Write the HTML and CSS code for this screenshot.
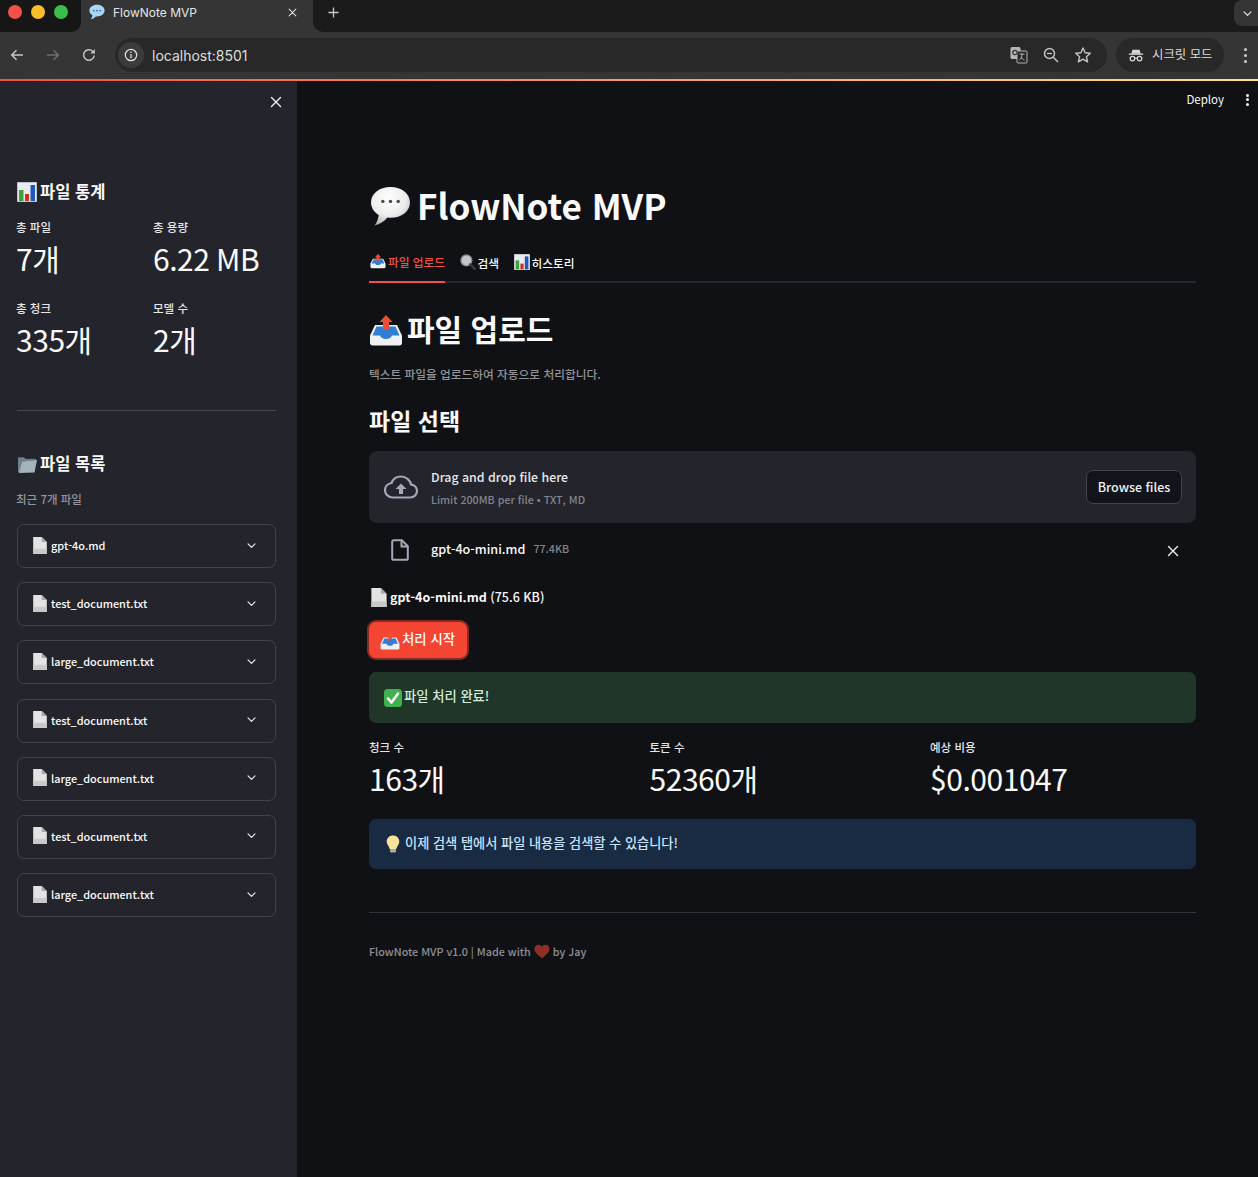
FILE: index.html
```html
<!DOCTYPE html>
<html lang="ko">
  <head>
    <meta charset="utf-8">
    <title>FlowNote MVP</title>
    <link rel="stylesheet" href="styles.css">
  </head>
  <body>
    <!-- emoji and icon shapes, reused below -->
    <svg class="defs" width="0" height="0">
      <defs>
        <radialGradient id="bubble-fill" cx="45%" cy="30%" r="75%">
          <stop offset="0" stop-color="#ffffff"/>
          <stop offset=".6" stop-color="#ececec"/>
          <stop offset="1" stop-color="#a8a8a8"/>
        </radialGradient>
      </defs>
      <symbol id="e-bubble" viewBox="0 0 40 40">
        <path d="M20 1C9 1 1 7.500 1 16c0 5 3 9.500 7.500 12.200C8.300 32 6.500 35.500 4.500 38.500c5-1 9.500-4 12.500-7.800 1 .2 2 .3 3 .3 11 0 19-6.500 19-15S31 1 20 1z" fill="url(#bubble-fill)"/>
        <circle cx="12.500" cy="15" r="1.700" fill="#4a4a4a"/><circle cx="20" cy="15" r="1.700" fill="#4a4a4a"/><circle cx="27.500" cy="15" r="1.700" fill="#4a4a4a"/>
      </symbol>
      <symbol id="e-tabbubble" viewBox="0 0 40 40">
        <path d="M20 2C9 2 1 8 1 16.500c0 5 3 9 7.500 11.700C8.300 32 6.500 35.500 4.500 38c5-1 9.500-3.500 12.500-7 1 .2 2 .3 3 .3 11 0 19-6.300 19-14.800S31 2 20 2z" fill="#a9d6f5"/>
        <circle cx="12" cy="16.500" r="2.300" fill="#2f6fb0"/><circle cx="20" cy="16.500" r="2.300" fill="#2f6fb0"/><circle cx="28" cy="16.500" r="2.300" fill="#2f6fb0"/>
      </symbol>
      <symbol id="e-chart" viewBox="0 0 20 20">
        <rect x="0" y="0" width="20" height="20" fill="#e9edf2"/>
        <rect x="0" y="0" width="20" height="20" fill="none" stroke="#8c97a3" stroke-width="1"/>
        <rect x="2" y="8" width="4.500" height="11" fill="#3fa23c"/>
        <rect x="8" y="12" width="4" height="7" fill="#c8321f"/>
        <rect x="13.500" y="3" width="4.500" height="16" fill="#1f58b8"/>
      </symbol>
      <symbol id="e-folder" viewBox="0 0 20 20">
        <path d="M1 3h6l1.500 1.500H18V9H1z" fill="#33414b"/>
        <path d="M1 3.500V18l2 1 2-11.500 14-1.500V5H8.500L7 3.500z" fill="#6f808b"/>
        <path d="M5 7.500L20 6l-2.500 12.500L2 19z" fill="#a3b3bd"/>
      </symbol>
      <symbol id="e-inbox" viewBox="0 0 34 32">
        <path d="M6 11h22l5 10.500V29c0 1.500-1 2.500-2.500 2.500h-27C2 31.500 1 30.500 1 29v-7.500z" fill="#eef0f3"/>
        <path d="M7.500 12.500h19l4 9H23c-.7 2-2.800 3.500-6 3.500s-5.300-1.500-6-3.500H3.500z" fill="#2f7fd6"/>
        <path d="M17 1l6.500 7H20v8h-6V8h-3.500z" fill="#ee4d38"/>
      </symbol>
      <symbol id="e-glass" viewBox="0 0 20 20">
        <circle cx="8" cy="8" r="6.800" fill="#c3c7cc" stroke="#858a90" stroke-width="1.600"/>
        <path d="M12.800 12.800L18.500 18.500" stroke="#3a3c40" stroke-width="3" stroke-linecap="round"/>
      </symbol>
      <symbol id="e-page" viewBox="0 0 16 20">
        <path d="M0 0h10l6 6v14H0z" fill="#e3e3e3"/>
        <path d="M10 0l6 6h-6z" fill="#a9a9a9"/>
        <path d="M0 14h16v6H0z" fill="#c9c9c9"/>
      </symbol>
      <symbol id="e-check" viewBox="0 0 18 18">
        <rect width="18" height="18" rx="3.500" fill="#3fb14f"/>
        <path d="M4 9.500l3.500 4L14 4.500" fill="none" stroke="#fff" stroke-width="2.600" stroke-linecap="round" stroke-linejoin="round"/>
      </symbol>
      <symbol id="e-bulb" viewBox="0 0 14 18">
        <path d="M7 .5C3.300.5.700 3.200.700 6.500c0 3 2.300 4.300 3 7.500h6.600c.7-3.200 3-4.500 3-7.500C13.300 3.200 10.700.5 7 .5z" fill="#f7e39a"/>
        <rect x="4" y="14" width="6" height="3.500" rx="1" fill="#a9adb3"/>
      </symbol>
      <symbol id="e-heart" viewBox="0 0 18 16">
        <path d="M9 15.500C3 11 .5 8.300.5 5 .5 2.500 2.500.5 5 .5c1.700 0 3.200.9 4 2.400C9.800 1.400 11.300.5 13 .5c2.500 0 4.500 2 4.500 4.500 0 3.300-2.500 6-8.500 10.500z" fill="#8f2f28"/>
      </symbol>
      <symbol id="i-x" viewBox="0 0 12 12">
        <path d="M1.500 1.500l9 9M10.500 1.500l-9 9" fill="none" stroke="currentColor" stroke-width="1.400" stroke-linecap="round"/>
      </symbol>
      <symbol id="i-chev" viewBox="0 0 12 12">
        <path d="M2.200 4.200L6 8l3.800-3.800" fill="none" stroke="currentColor" stroke-width="1.400" stroke-linecap="round" stroke-linejoin="round"/>
      </symbol>
    </svg>

    <div class="window">
      <div class="tabstrip">
        <div class="lights">
          <span class="light light-red"></span>
          <span class="light light-yellow"></span>
          <span class="light light-green"></span>
        </div>
        <div class="browser-tab">
          <svg class="favicon"><use href="#e-tabbubble"/></svg>
          <span class="browser-tab-title">FlowNote MVP</span>
          <svg class="browser-tab-x"><use href="#i-x"/></svg>
        </div>
        <div class="tab-rest">
          <svg class="new-tab" viewBox="0 0 12 12"><path d="M6 .5v11M.5 6h11" fill="none" stroke="currentColor" stroke-width="1.400"/></svg>
          <div class="tab-search">
            <svg viewBox="0 0 12 12"><use href="#i-chev"/></svg>
          </div>
        </div>
      </div>

      <div class="toolbar">
        <svg class="nav-icon" viewBox="0 0 16 16"><path d="M14 8H3M7.500 3.200L2.700 8l4.800 4.800" fill="none" stroke="#c4c4c4" stroke-width="1.500"/></svg>
        <svg class="nav-icon" viewBox="0 0 16 16"><path d="M2 8h11M8.500 3.200L13.300 8l-4.800 4.800" fill="none" stroke="#6e6e6e" stroke-width="1.500"/></svg>
        <svg class="nav-icon" viewBox="0 0 16 16"><path d="M13.200 8.500a5.300 5.300 0 1 1-1.500-4.200L13.500 6" fill="none" stroke="#c4c4c4" stroke-width="1.500"/><path d="M13.800 2v4.500H9.300z" fill="#c4c4c4"/></svg>
        <div class="omnibox">
          <span class="site-info">
            <svg viewBox="0 0 14 14"><circle cx="7" cy="7" r="5.700" fill="none" stroke="#e2e2e2" stroke-width="1.200"/><path d="M7 6.200v4" stroke="#e2e2e2" stroke-width="1.300"/><circle cx="7" cy="4.200" r=".8" fill="#e2e2e2"/></svg>
          </span>
          <span class="url">localhost:8501</span>
          <span class="omni-icons">
            <svg viewBox="0 0 18 18"><rect x=".5" y="1" width="10" height="12" rx="1.500" fill="#b5b5b5"/><rect x="7" y="5" width="10" height="12" rx="1" fill="#282828" stroke="#b5b5b5"/><path d="M9.500 8h5M12 8c0 3-1 5-2.500 6M11 11c.7 1.300 2 2.500 3.500 3" fill="none" stroke="#b5b5b5"/><circle cx="5" cy="6.500" r="2.200" fill="none" stroke="#333" stroke-width="1.200"/></svg>
            <svg viewBox="0 0 18 18"><circle cx="7.500" cy="7.500" r="5" fill="none" stroke="#c4c4c4" stroke-width="1.500"/><path d="M11.200 11.200L16 16" stroke="#c4c4c4" stroke-width="1.500"/><path d="M5 7.500h5" stroke="#c4c4c4" stroke-width="1.300"/></svg>
            <svg viewBox="0 0 18 18"><path d="M9 2l2.100 4.800 5.200.5-3.900 3.400 1.200 5.100L9 13.100l-4.600 2.700 1.200-5.100L1.700 7.300l5.200-.5z" fill="none" stroke="#c4c4c4" stroke-width="1.400" stroke-linejoin="round"/></svg>
          </span>
        </div>
        <div class="incognito">
          <svg viewBox="0 0 18 16"><path d="M5 1.500h8l1.300 4.500H3.700z" fill="#d6d6d6"/><path d="M1 6.500h16" stroke="#d6d6d6" stroke-width="1.500"/><circle cx="5" cy="11.500" r="2.600" fill="none" stroke="#d6d6d6" stroke-width="1.400"/><circle cx="13" cy="11.500" r="2.600" fill="none" stroke="#d6d6d6" stroke-width="1.400"/><path d="M7.500 11h3" stroke="#d6d6d6" stroke-width="1.300"/></svg>
          <span class="lift-1">시크릿 모드</span>
        </div>
        <div class="menu-dots"><span></span><span></span><span></span></div>
      </div>

      <div class="decoration"></div>

      <div class="app">
        <aside class="sidebar">
          <div class="sidebar-top">
            <svg class="sidebar-close"><use href="#i-x"/></svg>
          </div>
          <h3 class="side-title first"><svg class="emo-side"><use href="#e-chart"/></svg><span class="lift-1">파일 통계</span></h3>
          <div class="side-metrics">
            <div class="metric"><div class="metric-label">총 파일</div><div class="metric-value">7개</div></div>
            <div class="metric"><div class="metric-label">총 용량</div><div class="metric-value">6.22 MB</div></div>
            <div class="metric"><div class="metric-label">총 청크</div><div class="metric-value">335개</div></div>
            <div class="metric"><div class="metric-label">모델 수</div><div class="metric-value">2개</div></div>
          </div>
          <hr class="side-rule">
          <h3 class="side-title"><svg class="emo-side"><use href="#e-folder"/></svg><span class="lift-1">파일 목록</span></h3>
          <p class="side-caption">최근 7개 파일</p>
          <div class="expanders">
            <div class="expander"><svg class="emo-page"><use href="#e-page"/></svg><span class="expander-name">gpt-4o.md</span><svg class="chev"><use href="#i-chev"/></svg></div>
            <div class="expander"><svg class="emo-page"><use href="#e-page"/></svg><span class="expander-name">test_document.txt</span><svg class="chev"><use href="#i-chev"/></svg></div>
            <div class="expander"><svg class="emo-page"><use href="#e-page"/></svg><span class="expander-name">large_document.txt</span><svg class="chev"><use href="#i-chev"/></svg></div>
            <div class="expander"><svg class="emo-page"><use href="#e-page"/></svg><span class="expander-name">test_document.txt</span><svg class="chev"><use href="#i-chev"/></svg></div>
            <div class="expander"><svg class="emo-page"><use href="#e-page"/></svg><span class="expander-name">large_document.txt</span><svg class="chev"><use href="#i-chev"/></svg></div>
            <div class="expander"><svg class="emo-page"><use href="#e-page"/></svg><span class="expander-name">test_document.txt</span><svg class="chev"><use href="#i-chev"/></svg></div>
            <div class="expander"><svg class="emo-page"><use href="#e-page"/></svg><span class="expander-name">large_document.txt</span><svg class="chev"><use href="#i-chev"/></svg></div>
          </div>
        </aside>

        <main class="main">
          <div class="main-top">
            <span class="deploy">Deploy</span>
            <div class="main-dots"><span></span><span></span><span></span></div>
          </div>
          <div class="content">
            <h1 class="title"><svg class="emo-title"><use href="#e-bubble"/></svg><span class="lift-3">FlowNote MVP</span></h1>

            <div class="tabs">
              <div class="tab active"><svg class="emo-tab"><use href="#e-inbox"/></svg>파일 업로드</div>
              <div class="tab"><svg class="emo-tab"><use href="#e-glass"/></svg>검색</div>
              <div class="tab"><svg class="emo-tab"><use href="#e-chart"/></svg>히스토리</div>
            </div>

            <h2 class="section-title"><svg class="emo-section"><use href="#e-inbox"/></svg><span class="lift-2">파일 업로드</span></h2>
            <p class="caption">텍스트 파일을 업로드하여 자동으로 처리합니다.</p>
            <h3 class="sub-title">파일 선택</h3>

            <div class="uploader">
              <svg class="cloud" viewBox="0 0 34 24"><path d="M9 22.500h17c4 0 7-2.800 7-6.500 0-3.400-2.500-6-5.800-6.400C26 5 22 1.500 17 1.500c-4.300 0-8 2.600-9.500 6.500C3.800 8.500 1 11.500 1 15.200c0 4 3.500 7.300 8 7.300z" fill="none" stroke="#a3a8b8" stroke-width="2.200"/><path d="M17 8.500l5.500 5.500h-3.500v5h-4v-5h-3.500z" fill="#a3a8b8"/></svg>
              <div class="uploader-text">
                <div class="uploader-main">Drag and drop file here</div>
                <div class="uploader-sub">Limit 200MB per file • TXT, MD</div>
              </div>
              <button class="browse">Browse files</button>
            </div>

            <div class="file-row">
              <svg class="file-icon" viewBox="0 0 18 22"><path d="M2.800 1.200h8l6 6v12c0 .9-.7 1.600-1.600 1.600H2.800c-.9 0-1.600-.7-1.600-1.600V2.800c0-.9.700-1.600 1.600-1.600z" fill="none" stroke="#a3a8b8" stroke-width="2"/><path d="M10.500 1.500v6h6" fill="none" stroke="#a3a8b8" stroke-width="2"/></svg>
              <span class="file-name">gpt-4o-mini.md</span>
              <span class="file-size">77.4KB</span>
              <svg class="file-x"><use href="#i-x"/></svg>
            </div>

            <p class="file-line"><svg class="emo-line"><use href="#e-page"/></svg><strong class="lift-1">gpt-4o-mini.md</strong><span class="lift-1"> (75.6 KB)</span></p>

            <button class="primary"><svg class="emo-btn"><use href="#e-inbox"/></svg><span class="lift-2">처리 시작</span></button>

            <div class="alert alert-success"><svg class="emo-check"><use href="#e-check"/></svg><span class="lift-2">파일 처리 완료!</span></div>

            <div class="main-metrics">
              <div class="metric"><div class="metric-label">청크 수</div><div class="metric-value">163개</div></div>
              <div class="metric"><div class="metric-label">토큰 수</div><div class="metric-value">52360개</div></div>
              <div class="metric"><div class="metric-label">예상 비용</div><div class="metric-value">$0.001047</div></div>
            </div>

            <div class="alert alert-info"><svg class="emo-bulb"><use href="#e-bulb"/></svg><span class="lift-2">이제 검색 탭에서 파일 내용을 검색할 수 있습니다!</span></div>

            <hr class="main-rule">
            <p class="footer">FlowNote MVP v1.0 | Made with <svg class="emo-heart"><use href="#e-heart"/></svg> by Jay</p>
          </div>
        </main>
      </div>
    </div>
  </body>
</html>
```

FILE: styles.css
```css
* {
  box-sizing: border-box;
}

html, body {
  margin: 0;
  height: 100%;
  background: #101115;
}

body {
  font-family: "Noto Sans CJK KR", "Noto Sans", sans-serif;
  color: #fafafa;
}

h1, h2, h3, p, hr {
  margin: 0;
}

svg {
  display: block;
  flex: none;
}

/* the CJK font sits low in its line box, these pull the text back up */
.lift-1 {
  padding-bottom: 2px;
}

.lift-2 {
  padding-bottom: 4px;
}

.lift-3 {
  padding-bottom: 6px;
}

.defs {
  position: absolute;
}

.window {
  height: 1177px;
  display: flex;
  flex-direction: column;
  overflow: hidden;
}

/* browser frame */
.tabstrip {
  height: 32px;
  background: #353535;
  display: flex;
  flex: none;
}

.lights {
  width: 81px;
  height: 32px;
  background: #161616;
  padding: 5px 0 0 8px;
  display: flex;
  gap: 9px;
  border-bottom-right-radius: 10px;
}

.light {
  width: 14px;
  height: 14px;
  border-radius: 50%;
}

.light-red { background: #f4504a; }
.light-yellow { background: #f8bf2b; }
.light-green { background: #3bbf4c; }

.browser-tab {
  width: 232px;
  height: 32px;
  background: #353535;
  border-radius: 10px 10px 0 0;
  display: flex;
  align-items: center;
  padding: 0 16px 8px 8px;
  font-family: Inter, sans-serif;
  font-size: 12px;
  color: #e4e4e4;
}

.favicon {
  width: 16px;
  height: 16px;
  margin-right: 8px;
}

.browser-tab-title {
  flex: 1;
}

.browser-tab-x {
  width: 9px;
  height: 9px;
  color: #dcdcdc;
}

.tab-rest {
  flex: 1;
  background: #1b1b1b;
  border-bottom-left-radius: 10px;
  display: flex;
  padding: 7px 0 0 15px;
}

.new-tab {
  width: 11px;
  height: 11px;
  color: #c8c8c8;
}

.tab-search {
  width: 26px;
  height: 26px;
  margin: -7px -2px 0 auto;
  background: #353535;
  border-radius: 8px 0 0 8px;
  display: flex;
  align-items: center;
  justify-content: center;
  color: #e0e0e0;
}

.tab-search svg {
  width: 11px;
  height: 11px;
}

.toolbar {
  height: 47px;
  background: #353535;
  display: flex;
  align-items: center;
  padding: 0 0 1px 9px;
  flex: none;
}

.nav-icon {
  width: 16px;
  height: 16px;
  margin-right: 20px;
}

.nav-icon:nth-child(3) {
  margin-right: 18px;
}

.omnibox {
  width: 992px;
  height: 34px;
  background: #282828;
  border-radius: 17px;
  display: flex;
  align-items: center;
  padding: 0 15px 0 3px;
}

.site-info {
  width: 26px;
  height: 26px;
  border-radius: 50%;
  background: #3b3b3b;
  display: flex;
  align-items: center;
  justify-content: center;
}

.site-info svg {
  width: 14px;
  height: 14px;
}

.url {
  margin-left: 8px;
  font-family: Inter, sans-serif;
  font-size: 14px;
  color: #dedede;
  flex: 1;
}

.omni-icons {
  display: flex;
  align-items: center;
  gap: 14px;
}

.omni-icons svg {
  width: 18px;
  height: 18px;
}

.incognito {
  width: 108px;
  height: 34px;
  margin-left: 9px;
  background: #282828;
  border-radius: 17px;
  display: flex;
  align-items: center;
  padding-left: 12px;
  gap: 8px;
  font-size: 12.400px;
  color: #dcdcdc;
}

.incognito svg {
  width: 16px;
  height: 15px;
}

.menu-dots {
  margin-left: 20px;
  display: flex;
  flex-direction: column;
  gap: 3px;
}

.menu-dots span, .main-dots span {
  width: 3px;
  height: 3px;
  border-radius: 50%;
  background: #d0d0d0;
}

.decoration {
  height: 2px;
  flex: none;
  background: linear-gradient(90deg, #f4503f, #ffe27a);
}

/* streamlit app */
.app {
  flex: 1;
  display: flex;
  min-height: 0;
}

.sidebar {
  width: 297px;
  background: #23242c;
  padding: 0 21px 0 17px;
  flex: none;
}

.sidebar-top {
  height: 42px;
  display: flex;
  align-items: center;
  justify-content: flex-end;
  margin-right: -6px;
}

.sidebar-close {
  width: 12px;
  height: 12px;
  color: #f0f0f0;
}

.side-title {
  font-size: 16.500px;
  font-weight: 700;
  height: 24px;
  display: flex;
  align-items: center;
  margin-top: 41px;
}

.side-title.first {
  margin-top: 57px;
}

.emo-side {
  width: 20px;
  height: 20px;
  margin-right: 3px;
}

.side-metrics {
  display: grid;
  grid-template-columns: 137px 1fr;
  row-gap: 20px;
  margin: 15px 0 0 -1px;
}

.metric-label {
  font-size: 11.500px;
  font-weight: 500;
  line-height: 16px;
  color: #e6e6e8;
}

.metric-value {
  font-size: 30px;
  line-height: 40px;
  letter-spacing: -.45px;
  word-spacing: -1.500px;
  margin: 3px 0 2px;
  white-space: nowrap;
}

.side-rule {
  border: 0;
  border-top: 1px solid #45464e;
  margin-top: 49px;
}

.side-caption {
  font-size: 11.500px;
  font-weight: 500;
  line-height: 16px;
  color: #94959c;
  margin: 15px 0 0 -1px;
}

.expanders {
  display: flex;
  flex-direction: column;
  gap: 14.200px;
  margin-top: 17px;
}

.expander {
  height: 44px;
  border: 1px solid #43444b;
  border-radius: 7px;
  display: flex;
  align-items: center;
  padding: 0 18px 2px 15px;
  font-size: 10.900px;
  font-weight: 500;
}

.emo-page {
  width: 14px;
  height: 17px;
  margin-right: 4px;
}

.expander-name {
  flex: 1;
}

.chev {
  width: 11px;
  height: 11px;
  color: #e6e6e6;
}

.main {
  flex: 1;
  min-width: 0;
  background: #101115;
}

.main-top {
  height: 38px;
  display: flex;
  align-items: center;
  justify-content: flex-end;
  padding: 0 9px 1px 0;
}

.deploy {
  font-size: 11.500px;
  padding-bottom: 2px;
  margin-right: 22px;
}

.main-dots {
  display: flex;
  flex-direction: column;
  gap: 1.500px;
}

.main-dots span {
  background: #f0f0f0;
}

.content {
  width: 827px;
  margin-left: 72px;
}

.title {
  font-size: 35px;
  font-weight: 700;
  height: 46px;
  margin-top: 65px;
  display: flex;
  align-items: center;
}

.emo-title {
  width: 41px;
  height: 41px;
  margin: 0 6px 2px 1px;
}

.tabs {
  height: 40px;
  margin-top: 13px;
  border-bottom: 2px solid #26272d;
  display: flex;
  gap: 13.500px;
}

.tab {
  height: 40px;
  display: flex;
  align-items: center;
  padding-bottom: 2px;
  font-size: 11.700px;
  font-weight: 500;
}

.tab.active {
  color: #f4503f;
  border-bottom: 2px solid #f4503f;
}

.emo-tab {
  width: 16px;
  height: 16px;
  margin: 0 2px 0 1px;
}

.section-title {
  font-size: 30px;
  font-weight: 700;
  height: 40px;
  margin-top: 27px;
  display: flex;
  align-items: center;
}

.emo-section {
  width: 34px;
  height: 32px;
  margin-right: 4px;
}

.caption {
  font-size: 11.700px;
  font-weight: 500;
  line-height: 16px;
  color: #93949a;
  margin-top: 16px;
}

.sub-title {
  font-size: 23px;
  font-weight: 700;
  line-height: 28px;
  margin-top: 24px;
  padding-bottom: 2px;
}

.uploader {
  height: 72px;
  margin-top: 15px;
  background: #23242c;
  border-radius: 8px;
  display: flex;
  align-items: center;
  padding: 0 14px 0 15px;
}

.cloud {
  width: 34px;
  height: 24px;
  margin-right: 13px;
}

.uploader-text {
  flex: 1;
}

.uploader-main {
  font-size: 12.350px;
  font-weight: 500;
  line-height: 18px;
  margin-top: 2px;
  color: #e8e8ea;
}

.uploader-sub {
  font-size: 10.700px;
  font-weight: 500;
  line-height: 16px;
  color: #83858d;
  margin-top: 6px;
}

.browse {
  width: 96px;
  height: 34px;
  background: #12141b;
  border: 1px solid #43444b;
  border-radius: 7px;
  color: #f0f0f0;
  font-family: inherit;
  font-size: 12.500px;
  font-weight: 500;
  padding: 0 0 2px;
}

.file-row {
  height: 40px;
  margin-top: 7px;
  display: flex;
  align-items: center;
  padding: 0 17px 0 22px;
}

.file-icon {
  width: 18px;
  height: 22px;
  margin-right: 22px;
}

.file-name {
  font-size: 12.600px;
  font-weight: 500;
  padding-bottom: 3px;
}

.file-size {
  font-size: 10.700px;
  font-weight: 500;
  color: #83858d;
  margin-left: 8px;
  padding-bottom: 3px;
  flex: 1;
}

.file-x {
  width: 12px;
  height: 12px;
  margin-top: 1px;
  color: #f0f0f0;
}

.file-line {
  font-size: 12.500px;
  font-weight: 500;
  height: 20px;
  margin-top: 17px;
  display: flex;
  align-items: center;
  white-space: pre;
}

.file-line strong {
  font-weight: 700;
}

.emo-line {
  width: 16px;
  height: 19px;
  margin: 0 3px 0 2px;
}

.primary {
  display: flex;
  align-items: center;
  width: 98px;
  height: 36px;
  margin-top: 15px;
  padding: 0 0 0 11px;
  background: #f44532;
  border: 0;
  border-radius: 7px;
  box-shadow: 0 0 0 2px rgba(244, 69, 50, .5);
  color: #fff;
  font-family: inherit;
  font-size: 13.400px;
  font-weight: 500;
}

.emo-btn {
  width: 20px;
  height: 19px;
  margin-right: 2px;
}

.alert {
  display: flex;
  align-items: center;
  border-radius: 7px;
  font-size: 13.300px;
  font-weight: 500;
  padding-left: 15px;
}

.alert-success {
  height: 51px;
  margin-top: 14px;
  background: #1f3628;
  color: #d2ecd9;
}

.emo-check {
  width: 18px;
  height: 18px;
  margin-right: 2px;
}

.main-metrics {
  display: grid;
  grid-template-columns: repeat(3, 280.500px);
  margin-top: 16px;
}

.alert-info {
  height: 50px;
  margin-top: 19px;
  background: #192a43;
  color: #c7e3fb;
  padding-left: 17px;
  font-size: 13.200px;
}

.emo-bulb {
  width: 14px;
  height: 18px;
  margin-right: 5px;
}

.main-rule {
  border: 0;
  border-top: 1px solid #34353b;
  margin-top: 43px;
}

.footer {
  font-size: 10.750px;
  font-weight: 500;
  height: 16px;
  color: #8f9096;
  margin-top: 31px;
  padding-bottom: 2px;
  display: flex;
  align-items: center;
  white-space: pre;
}

.emo-heart {
  width: 16px;
  height: 15px;
}
```
